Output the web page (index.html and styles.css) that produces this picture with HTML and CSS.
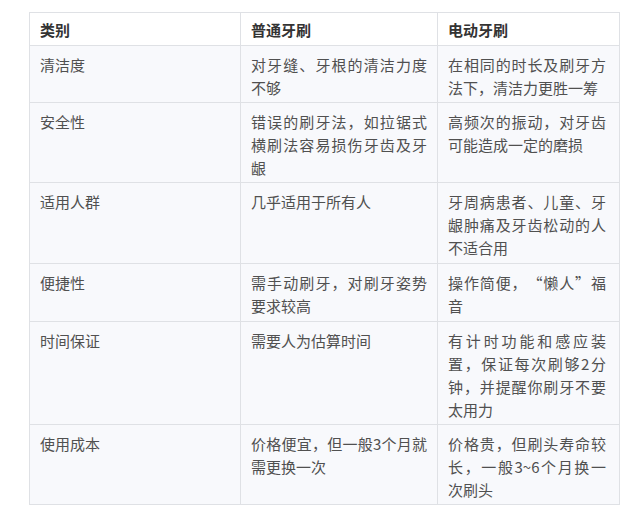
FILE: index.html
```html
<!DOCTYPE html>
<html lang="zh-CN">
<head>
<meta charset="utf-8">
<link rel="stylesheet" href="styles.css">
</head>
<body>
<table class="cmp">
  <colgroup>
    <col class="c1"><col class="c2"><col class="c3">
  </colgroup>
  <thead>
    <tr class="head"><th>类别</th><th>普通牙刷</th><th>电动牙刷</th></tr>
  </thead>
  <tbody>
    <tr class="r2"><td>清洁度</td><td>对牙缝、牙根的清洁力度不够</td><td>在相同的时长及刷牙方法下，清洁力更胜一筹</td></tr>
    <tr class="r3"><td>安全性</td><td>错误的刷牙法，如拉锯式横刷法容易损伤牙齿及牙龈</td><td>高频次的振动，对牙齿可能造成一定的磨损</td></tr>
    <tr class="r3b"><td>适用人群</td><td>几乎适用于所有人</td><td>牙周病患者、儿童、牙龈肿痛及牙齿松动的人不适合用</td></tr>
    <tr class="r2b"><td>便捷性</td><td>需手动刷牙，对刷牙姿势要求较高</td><td>操作简便，“懒人”福音</td></tr>
    <tr class="r4"><td>时间保证</td><td>需要人为估算时间</td><td>有计时功能和感应装置，保证每次刷够2分钟，并提醒你刷牙不要太用力</td></tr>
    <tr class="r3"><td>使用成本</td><td>价格便宜，但一般3个月就需更换一次</td><td>价格贵，但刷头寿命较长，一般3~6个月换一次刷头</td></tr>
  </tbody>
</table>
</body>
</html>
```
FILE: styles.css
```css
html, body {
  margin: 0;
  padding: 0;
  background: #ffffff;
}
body {
  padding: 12px 0 0 29px;
  font-family: "Noto Sans CJK SC", "Noto Sans", sans-serif;
}
.cmp {
  border-collapse: collapse;
  table-layout: fixed;
  width: 590px;
  font-size: 15px;
  line-height: 23px;
  text-spacing-trim: space-all;
}
.c1 { width: 211px; }
.c2 { width: 197px; }
.c3 { width: 182px; }
.cmp th, .cmp td {
  border: 1px solid #dfe1e5;
  padding: 7px 10px 3px 10px;
  text-align: justify;
  vertical-align: top;
}
.cmp th:last-child, .cmp td:last-child {
  padding-right: 13px;
}
.cmp th {
  background: #ffffff;
  color: #333333;
  font-weight: bold;
  height: 23px;
}
.cmp td {
  background: #f8f9fc;
  color: #505050;
}
.head th { padding-top: 5px; padding-bottom: 4px; }
.r3b td { height: 70px; }
.r2b td { height: 47px; }
```
